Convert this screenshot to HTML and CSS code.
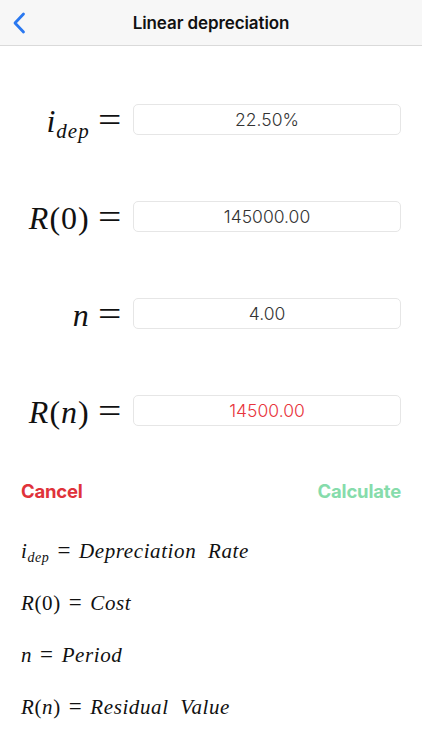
FILE: index.html
```html
<!DOCTYPE html>
<html>
<head>
<meta charset="utf-8">
<link rel="stylesheet" href="styles.css">
</head>
<body>
<header class="nav">
  <svg class="back" width="14" height="22" viewBox="0 0 14 22"><path d="M11.5 2 L3 11 L11.5 20" fill="none" stroke="#2a78f0" stroke-width="2.8" stroke-linecap="round" stroke-linejoin="round"/></svg>
  <div class="title">Linear depreciation</div>
</header>
<main class="form">
  <div class="row">
    <div class="label"><span class="it">i</span><sub class="it">dep</sub><span class="eq">=</span></div>
    <div class="box">22.50%</div>
  </div>
  <div class="row">
    <div class="label"><span class="it">R</span>(0)<span class="eq">=</span></div>
    <div class="box">145000.00</div>
  </div>
  <div class="row">
    <div class="label"><span class="it">n</span><span class="eq">=</span></div>
    <div class="box">4.00</div>
  </div>
  <div class="row">
    <div class="label"><span class="it">R</span>(<span class="it">n</span>)<span class="eq">=</span></div>
    <div class="box result">14500.00</div>
  </div>
</main>
<div class="buttons">
  <span class="cancel">Cancel</span>
  <span class="calc">Calculate</span>
</div>
<section class="legend">
  <div class="line"><span class="it">i</span><sub class="it">dep</sub><span class="eq">=</span><span class="it">Depreciation&nbsp;&nbsp;Rate</span></div>
  <div class="line"><span class="it">R</span>(0)<span class="eq">=</span><span class="it">Cost</span></div>
  <div class="line"><span class="it">n</span><span class="eq">=</span><span class="it">Period</span></div>
  <div class="line"><span class="it">R</span>(<span class="it">n</span>)<span class="eq">=</span><span class="it">Residual&nbsp;&nbsp;Value</span></div>
</section>
</body>
</html>
```
FILE: styles.css
```css
html, body {
  margin: 0;
  padding: 0;
  background: #ffffff;
}
body {
  width: 422px;
  height: 750px;
  overflow: hidden;
  font-family: "Liberation Serif", serif;
  color: #111;
}
.nav {
  height: 45px;
  background: #f7f7f7;
  border-bottom: 1px solid #dadada;
  display: flex;
  align-items: center;
  justify-content: center;
  position: relative;
}
.back {
  position: absolute;
  left: 12px;
  top: 12px;
}
.title {
  font-family: "Inter", "Liberation Sans", sans-serif;
  font-weight: 600;
  font-size: 17px;
  color: #111;
  letter-spacing: -0.1px;
}
.form {
  padding-top: 25px;
  display: flex;
  flex-direction: column;
}
.row {
  height: 97px;
  display: flex;
  align-items: center;
}
.label {
  width: 121px;
  text-align: right;
  font-size: 32px;
  margin-right: 12px;
  white-space: nowrap;
  color: #111;
  letter-spacing: 1px;
}
.it {
  font-style: italic;
}
.label sub {
  font-size: 21px;
  vertical-align: -6px;
  line-height: 0;
}
.label .eq {
  margin-left: 11px;
  font-size: 36px;
  letter-spacing: 0;
  display: inline-block;
  transform: scaleX(1.15);
  transform-origin: right center;
}
.box {
  width: 266px;
  height: 29px;
  border: 1px solid #e6e6e6;
  border-radius: 5px;
  display: flex;
  align-items: center;
  justify-content: center;
  font-family: "Inter", "Liberation Sans", sans-serif;
  font-weight: 300;
  font-size: 17.5px;
  color: #333;
}
.box.result {
  color: #e8343c;
}
.buttons {
  display: flex;
  justify-content: space-between;
  padding: 21px 21px 0 21px;
  font-family: "Inter", "Liberation Sans", sans-serif;
  font-weight: 700;
  font-size: 18.5px;
  letter-spacing: -0.2px;
}
.cancel {
  color: #e0323a;
}
.calc {
  color: #86dcab;
}
.legend {
  padding: 37px 21px 0 21px;
  display: flex;
  flex-direction: column;
  gap: 28px;
}
.line {
  font-size: 21px;
  height: 24px;
  line-height: 24px;
  white-space: nowrap;
  letter-spacing: 0.6px;
}
.line sub {
  font-size: 14px;
  vertical-align: -4px;
  line-height: 0;
}
.line .eq {
  margin: 0 8px;
  font-size: 23px;
}
```
